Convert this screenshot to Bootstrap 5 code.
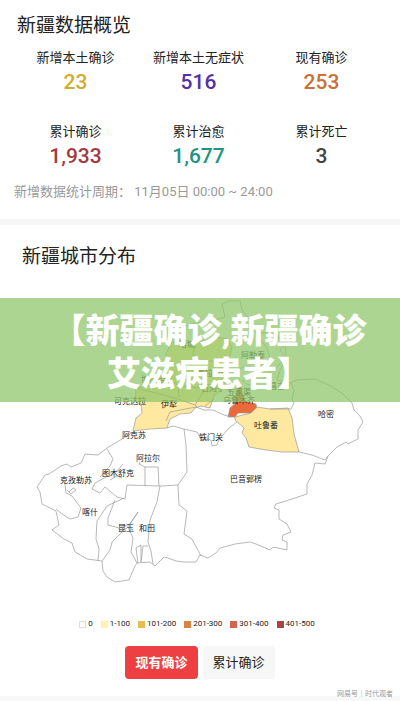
<!DOCTYPE html>
<html lang="zh-CN">
<head>
<meta charset="utf-8">
<meta name="viewport" content="width=device-width, initial-scale=1">
<title>新疆数据概览</title>
<link href="https://cdn.jsdelivr.net/npm/bootstrap@5.3.0/dist/css/bootstrap.min.css" rel="stylesheet">
<style>
body{font-family:Roboto,"Noto Sans CJK SC",sans-serif;color:#222;background:#fff}
.sec-title{font-size:19px;line-height:28px;font-weight:400;color:#222}
.overview .sec-title{padding-left:17px}
.map-area .sec-title{padding-left:22px}
.stats{padding:8px 17px 0 14px}
.stat-label{font-size:13px;line-height:20px;font-weight:400}
.stat-num{font-size:21px;line-height:28px;font-weight:500}
.stat-grid{row-gap:26px}
.c-yellow{color:#cfae2c}.c-purple{color:#5630a8}.c-orange{color:#cb7138}
.c-red{color:#a53a3e}.c-teal{color:#1f9484}.c-dark{color:#444}
.period{font-size:13px;line-height:20px;color:#999;padding:12px 14px 0}
.divider{height:6px;background:#f6f6f6}
.overview{padding-top:12px;padding-bottom:17px}
.map-area{padding-top:18px}
.map-svg{display:block;width:100%;height:auto}
.map-svg text{font-size:8px;fill:#222;text-anchor:middle}
.banner{top:73px;left:0;right:0;padding:12px 0 6px 18px;background:rgba(140,197,102,.72)}
.banner-title{font-size:34px;line-height:43px;font-weight:900;color:#fff}
.legend-row{font-size:8px;line-height:12px;column-gap:8px;padding:18px 6px 0 0}
.swatch{width:7px;height:7px;margin-right:2px}
.s0{border:1px solid #ddd}.s1{background:#fff2b0}.s2{background:#e5bd52}
.s3{background:#d9843c}.s4{background:#cf6650}.s5{background:#a94442}
.tabs-row{gap:5px;padding:16px 0 17px}
.tab-btn{font-size:13px;line-height:19px;padding:7px 10px;border-radius:4px;border:0;color:#222;background:#f7f7f7}
.tab-btn.on{font-weight:700;color:#fff;background:#ee4043}
.foot{background:#f8f8f8;height:5px}
.source{font-size:7px;line-height:10px;right:7px;bottom:2px;color:#999}
</style>
</head>
<body>
<main>
<section class="overview">
  <h2 class="sec-title mb-0">新疆数据概览</h2>
  <div class="stats">
    <div class="row g-0 text-center stat-grid">
      <div class="col-4"><div class="stat-label">新增本土确诊</div><div class="stat-num c-yellow">23</div></div>
      <div class="col-4"><div class="stat-label">新增本土无症状</div><div class="stat-num c-purple">516</div></div>
      <div class="col-4"><div class="stat-label">现有确诊</div><div class="stat-num c-orange">253</div></div>
      <div class="col-4"><div class="stat-label">累计确诊</div><div class="stat-num c-red">1,933</div></div>
      <div class="col-4"><div class="stat-label">累计治愈</div><div class="stat-num c-teal">1,677</div></div>
      <div class="col-4"><div class="stat-label">累计死亡</div><div class="stat-num c-dark">3</div></div>
    </div>
  </div>
  <p class="period mb-0">新增数据统计周期： 11月05日 00:00 ~ 24:00</p>
</section>
<div class="divider"></div>
<section class="map-area position-relative">
  <h2 class="sec-title mb-0">新疆城市分布</h2>
  <svg class="map-svg" viewBox="0 271 400 329" role="img" aria-label="新疆城市分布">
    <g fill="none" stroke="#999" stroke-width=".7" stroke-linejoin="round">
      <path fill="#ffe8a0" d="M171 343L180 340L195 342L206 340L216 337L227 339L232 347L230 356L225 361L228 369L223 377L226 386L214 396L210 408L201 406L195 408L191 413L180 414L170 419L167 428L150 429L133 431L136 418L142 413L141 405L135 401L136 388L155 384L163 378L167 365L166 354Z"/>
      <path d="M136 388L160 394L178 399L195 405L200 397L205 389L178 385L163 378M196 342L193 354L199 363L212 361L228 369M178 385L179 397M202 361L202 373L214 375L212 392M195 405L197 407"/>
      <path fill="#ec693a" d="M240 383L242 392L245 401L256 404L257 409L251 413L238 413L235 417L228 417L230 408L236 403L236 394Z"/>
      <path fill="#ffe8a0" d="M235 417L251 413L257 407L270 409L288 408L292 418L294 434L299 452L282 452L266 450L249 447L246 438L242 433L244 428L235 420Z"/>
      <path d="M171 343L177 329L194 323L208 322L225 317L222 304L228 301L240 301L242 310L250 320L256 334L273 331L285 344L286 357L280 371L277 380L291 383L296 380L315 379L331 386L343 394L352 403L354 410L360 416L363 422L358 430L358 439L348 444L346 442L337 447L328 456L325 464L315 463L312 475L307 484L307 494L286 501L276 504L274 508L279 510L279 519L287 524L291 532L283 535L282 540L287 542L287 550L273 547L270 550L256 544L250 542L235 544L220 548L216 553L208 558L200 555L196 562L184 562L176 561L168 558L164 557L155 566L150 562L137 563L135 566L129 580L115 582L107 577L103 571L102 561L87 559L75 552L72 543L64 539L52 530L59 525L56 511L42 504L40 492L37 487L45 475L49 474L61 466L67 464L71 467L81 463L85 454L98 455L107 448L122 439L135 431"/>
      <path d="M167 428L173 426L184 429L197 432L201 439L211 440L212 446L217 445L219 440L223 435L229 428L237 422M166 421L170 412L196 407L204 410L213 410L224 415L232 417M184 429L186 445L187 472L178 485L161 486L127 485L125 499L117 497L105 487L100 493L92 489L95 483L108 476M107 449L113 459L110 466L100 477M145 486L145 467L139 464L140 462M145 467L158 467L159 486M160 486L157 502L150 520L148 542L151 551L153 564M178 485L179 505L187 511L184 534L192 539L201 556M124 498L107 506L97 521L96 539L99 549L98 561M102 561L110 550L112 542L122 532L127 528L138 512L130 524L119 528L108 525L108 518L115 500M128 527L133 538L131 552L137 563M138 563L136 548L141 545L141 562M141 562L143 546L148 546M56 509L62 514L70 519L78 517L81 508L72 496L66 493L65 484L62 479M67 490L71 494L76 490L73 488L69 492M110 473L117 471L123 464M110 480L117 476L122 478M299 452L312 455L325 460L328 456M270 409L291 409L294 403L292 399L294 391L291 383M219 384L226 390L235 392M214 399L205 406"/>
      <path d="M285 344L280 350L285 357L278 366L268 373L261 382L248 385L242 380M256 334L267 348L270 359L263 369L248 366L235 370"/>
    </g>
    <g>
      <text x="187" y="347">塔城</text><text x="253" y="358">阿勒泰</text><text x="157" y="382">博尔塔拉</text>
      <text x="213" y="376">克拉玛依</text><text x="213" y="391">石河子</text><text x="239" y="395">五家渠</text>
      <text x="239" y="403">乌鲁木齐</text><text x="277" y="389">昌吉</text><text x="130" y="404">可克达拉</text>
      <text x="169" y="407">伊犁</text><text x="326" y="417">哈密</text><text x="266" y="428">吐鲁番</text>
      <text x="134" y="438">阿克苏</text><text x="211" y="440">铁门关</text><text x="148" y="461">阿拉尔</text>
      <text x="118" y="476">图木舒克</text><text x="76" y="483">克孜勒苏</text><text x="246" y="482">巴音郭楞</text>
      <text x="90" y="515">喀什</text><text x="126" y="531">昆玉</text><text x="147" y="531">和田</text>
    </g>
  </svg>
  <div class="banner position-absolute text-center">
    <h1 class="banner-title mb-0">【新疆确诊,新疆确诊<br>艾滋病患者】</h1>
  </div>
</section>
<section class="position-relative">
  <div class="legend-row d-flex justify-content-center">
    <span class="d-flex align-items-center"><i class="swatch s0"></i>0</span>
    <span class="d-flex align-items-center"><i class="swatch s1"></i>1-100</span>
    <span class="d-flex align-items-center"><i class="swatch s2"></i>101-200</span>
    <span class="d-flex align-items-center"><i class="swatch s3"></i>201-300</span>
    <span class="d-flex align-items-center"><i class="swatch s4"></i>301-400</span>
    <span class="d-flex align-items-center"><i class="swatch s5"></i>401-500</span>
  </div>
  <div class="tabs-row d-flex justify-content-center">
    <button type="button" class="tab-btn on">现有确诊</button>
    <button type="button" class="tab-btn">累计确诊</button>
  </div>
  <div class="foot"></div>
  <small class="source position-absolute">网易号｜时代观者</small>
</section>
</main>
<script src="https://cdn.jsdelivr.net/npm/bootstrap@5.3.0/dist/js/bootstrap.bundle.min.js"></script>
</body>
</html>
